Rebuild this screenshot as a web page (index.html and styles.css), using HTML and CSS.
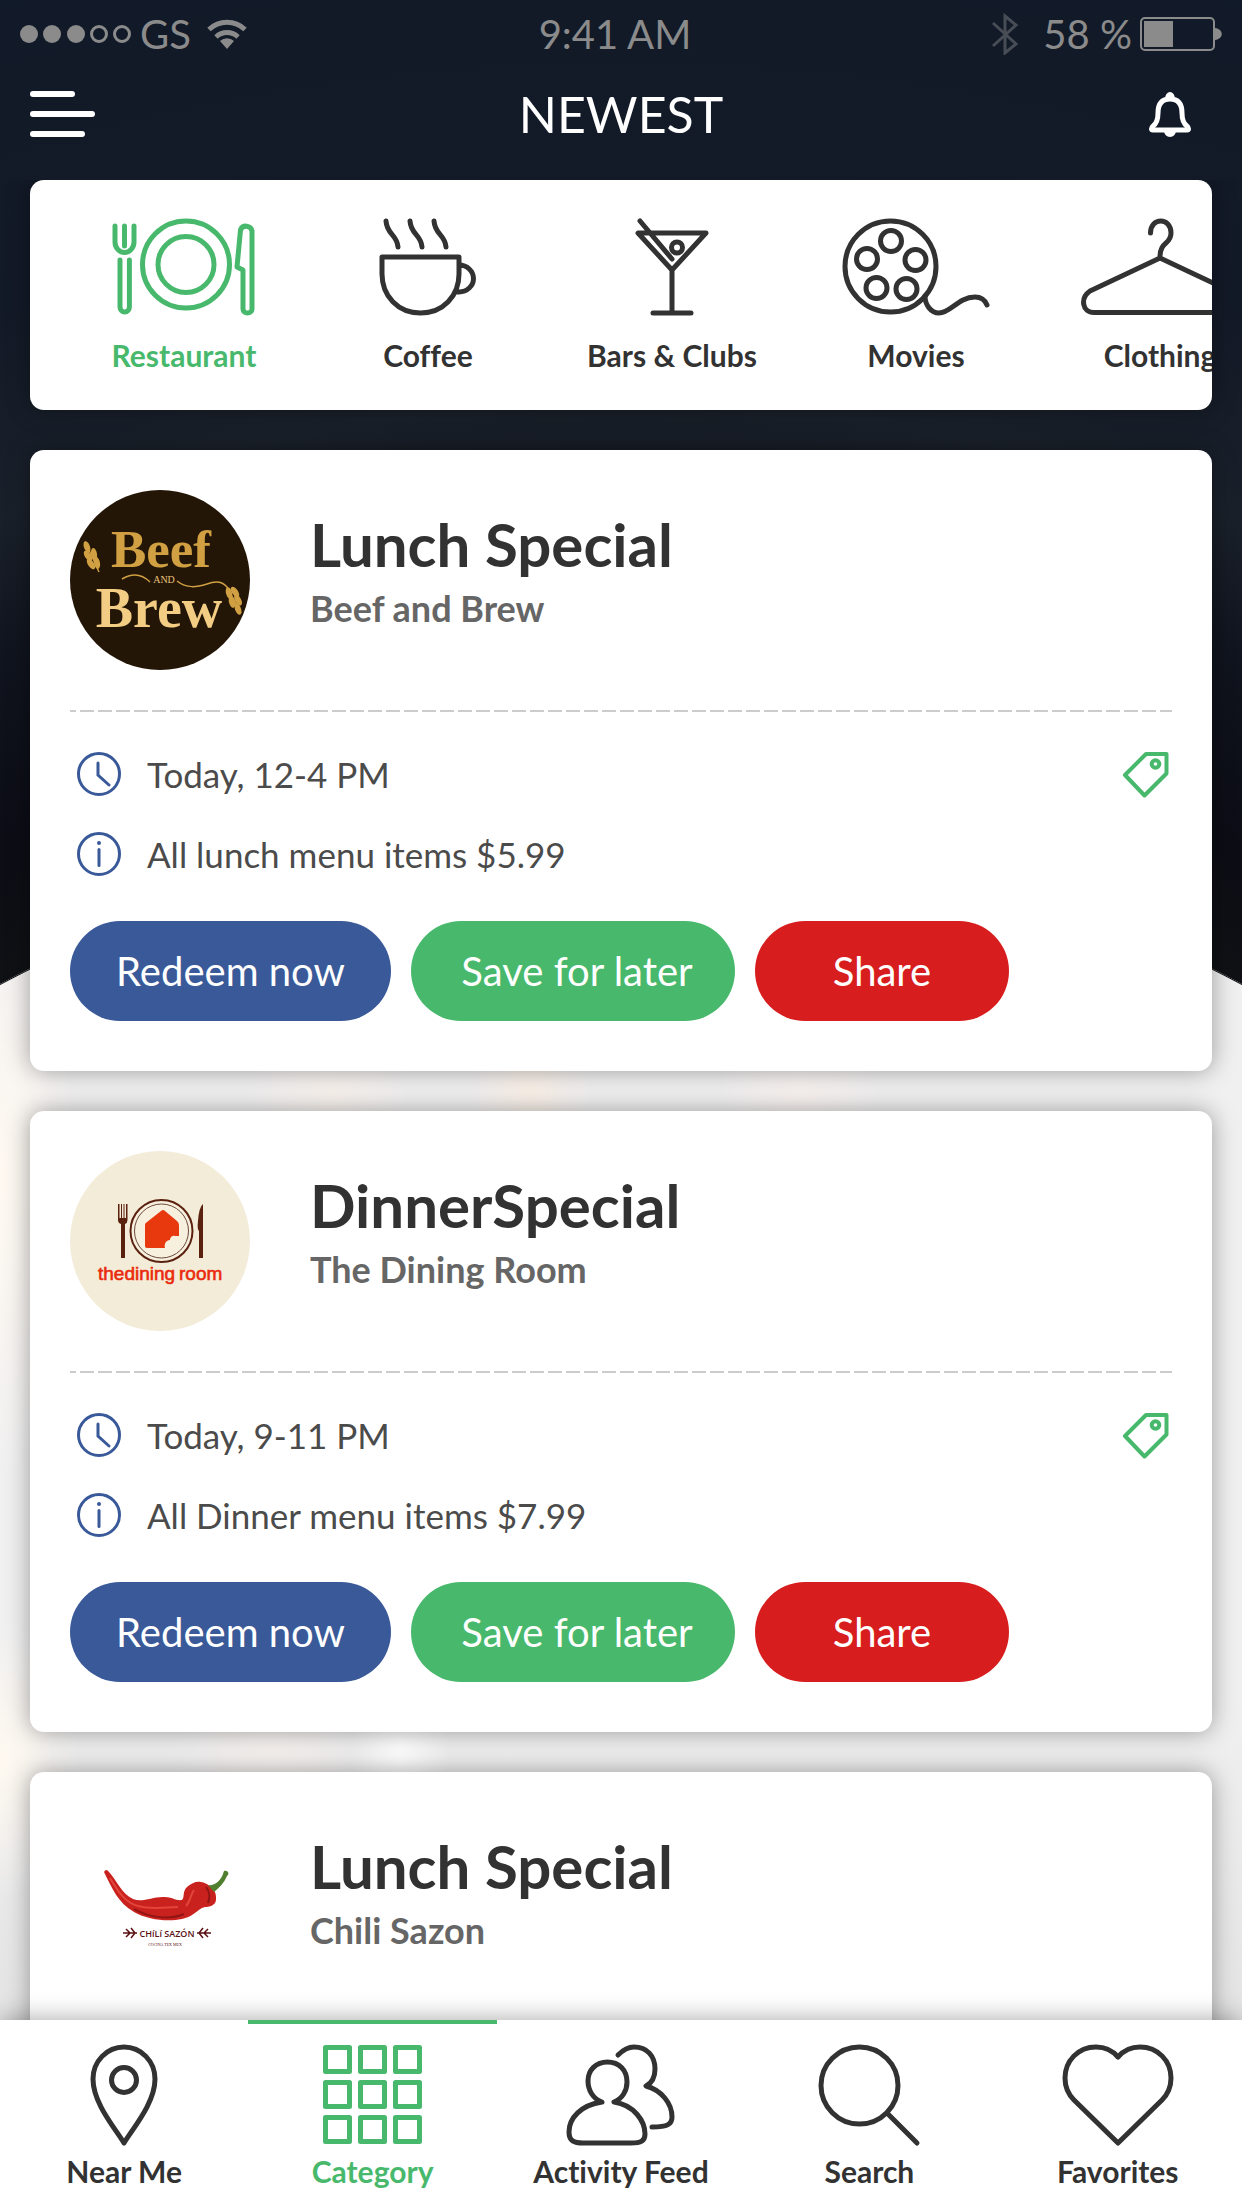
FILE: index.html
```html
<!DOCTYPE html>
<html lang="en">
<head>
<meta charset="utf-8">
<meta name="viewport" content="width=device-width, initial-scale=1">
<title>Newest</title>
<link rel="stylesheet" href="styles.css">
</head>
<body>
<svg class="sprite" aria-hidden="true">
  <symbol id="clock" viewBox="0 0 44 44"><circle cx="22" cy="22" r="20.500"/><path d="M21 11v12l11 10"/></symbol>
  <symbol id="info" viewBox="0 0 44 44"><circle cx="22" cy="22" r="20.500"/><path d="M22 17.500v16"/><circle class="solid" cx="22" cy="11" r="2"/></symbol>
  <symbol id="tag" viewBox="0 0 46 46"><path d="M23 2h20.500v19.500L21.500 43.500 2 23z"/><circle cx="32.500" cy="12" r="3.800"/></symbol>
</svg>
<div class="app">
  <header class="top">
    <div class="status">
      <div class="status-left">
        <svg width="112" height="20" viewBox="0 0 112 20" aria-hidden="true"><g fill="currentColor"><circle cx="9" cy="10" r="9"/><circle cx="32" cy="10" r="9"/><circle cx="56" cy="10" r="9"/></g><g fill="none" stroke="currentColor" stroke-width="3"><circle cx="79" cy="10" r="7.500"/><circle cx="102" cy="10" r="7.500"/></g></svg>
        <span>GS</span>
        <svg class="wifi" width="40" height="30" viewBox="0 0 40 30" aria-hidden="true"><g fill="none" stroke="currentColor" stroke-width="5"><path d="M2 10.500a26 26 0 0 1 36 0"/><path d="M9 18a16 16 0 0 1 22 0"/></g><path fill="currentColor" d="M13 22a10.500 10.500 0 0 1 14 0l-7 8z"/></svg>
      </div>
      <span class="time">9:41 AM</span>
      <div class="status-right">
        <svg class="bluetooth" width="28" height="42" viewBox="0 0 28 42" aria-hidden="true"><path d="M2 10l23 21-11 9V3l11 9L2 33"/></svg>
        <span>58 %</span>
        <svg width="82" height="34" viewBox="0 0 82 34" aria-hidden="true"><rect x="1" y="1" width="73" height="32" rx="4" fill="none" stroke="currentColor" stroke-width="2"/><path fill="currentColor" d="M4 4h29v26H4zM75 11c9 1 9 11 0 12z"/></svg>
      </div>
    </div>
    <div class="bar">
      <button class="icon-button" type="button" aria-label="Menu"><svg width="66" height="46" viewBox="0 0 66 46"><path fill="none" stroke="currentColor" stroke-width="6" stroke-linecap="round" d="M3 3h39M3 23h59M3 43h49"/></svg></button>
      <h1 class="page-title">NEWEST</h1>
      <button class="icon-button bell" type="button" aria-label="Notifications"><svg width="44" height="46" viewBox="0 0 44 46"><path fill="none" stroke="currentColor" stroke-width="5" stroke-linejoin="round" d="M22 8C13 8 10 14 10 22c0 8-2 11-5 13-2 2-2 4 0 4h34c2 0 2-2 0-4-3-2-5-5-5-13 0-8-3-14-12-14z"/><path fill="currentColor" d="M17 8a5 7 0 0 1 10 0zM16 40a6 6 0 0 0 12 0z"/></svg></button>
    </div>
  </header>

  <main class="feed">
    <nav class="categories" aria-label="Categories">
      <a class="category active" href="#restaurant"><svg width="142" height="96" viewBox="0 0 142 96"><path d="M2 7v16a9.500 10.500 0 0 0 19 0V7M11.500 7v20M7 41v47a4.700 5 0 0 0 9.400 0V41"/><circle cx="73" cy="45.500" r="43.500"/><circle cx="73" cy="45.500" r="28"/><path d="M139 12a6 6 0 0 0-11.500-1L124 48l6 3v39a4.500 4 0 0 0 9 0z"/></svg>Restaurant</a>
      <a class="category" href="#coffee"><svg width="96" height="96" viewBox="0 0 96 96"><path d="M6 2c1 14 11 13 12 26M30 2c1 14 11 13 12 26M54 2c1 14 11 13 12 26M2 38h77v17c0 22-16 39-38.500 39S2 77 2 55zM79 46a14.500 13.500 0 0 1 0 27h-3"/></svg>Coffee</a>
      <a class="category" href="#bars"><svg width="72" height="96" viewBox="0 0 72 96"><path d="M2 14h68L36 51zM4 2l32 38M36 51v42M17 94h38"/><circle cx="41" cy="28.500" r="5.500"/></svg>Bars &amp; Clubs</a>
      <a class="category" href="#movies"><svg width="146" height="96" viewBox="0 0 146 96"><circle cx="47.500" cy="47.500" r="45.500"/><circle cx="48" cy="22" r="10.500"/><circle cx="24" cy="40" r="10.500"/><circle cx="72.500" cy="41" r="10.500"/><circle cx="33.500" cy="69" r="10.500"/><circle cx="63.500" cy="70" r="10.500"/><path d="M82 77c0 9 6 17 14 17 12 0 19-16 36-16 6 0 10 3 12 8"/></svg>Movies</a>
      <a class="category" href="#clothing"><svg width="158" height="96" viewBox="0 0 158 96"><path d="M69.500 14c0-16 20.500-16 20.500 0 0 12-11 8-11 24M79 39L9 72c-10 7-8 21.500 4 21.500h132c12 0 14-14.500 4-21.500z"/></svg>Clothing</a>
    </nav>

    <article class="card">
      <div class="card-head">
        <svg class="logo" viewBox="0 0 180 180" role="img" aria-label="Beef and Brew">
          <circle cx="90" cy="90" r="90" fill="#241606"/>
          <g class="logo-serif" text-anchor="middle"><text x="91" y="77" font-size="53" fill="#d0a042">Beef</text><text x="89" y="137" font-size="56" fill="#f3cd83">Brew</text></g>
          <text class="logo-small" x="94" y="93" font-size="10" text-anchor="middle" fill="#e8c27a">AND</text>
          <g fill="none" stroke="#d0a042" stroke-width="1.500"><path d="M29 82c-4-9-8-18-14-30M80 92c-8-8-18-9-28-3M107 91c10 8 20 6 30 3 10-4 16-2 20 3l14 26"/></g>
          <g fill="#d0a042"><ellipse cx="17" cy="57" rx="3" ry="6" transform="rotate(-20 17 57)"/><ellipse cx="18" cy="66" rx="3" ry="6" transform="rotate(-35 18 66)"/><ellipse cx="24" cy="64" rx="3" ry="6" transform="rotate(-10 24 64)"/><ellipse cx="21" cy="74" rx="3" ry="6" transform="rotate(-35 21 74)"/><ellipse cx="27" cy="73" rx="3" ry="6" transform="rotate(-10 27 73)"/><ellipse cx="159" cy="103" rx="3" ry="6" transform="rotate(-15 159 103)"/><ellipse cx="165" cy="102" rx="3" ry="6" transform="rotate(-35 165 102)"/><ellipse cx="162" cy="112" rx="3" ry="6" transform="rotate(-15 162 112)"/><ellipse cx="168" cy="110" rx="3" ry="6" transform="rotate(-30 168 110)"/><ellipse cx="168" cy="119" rx="3" ry="6" transform="rotate(-20 168 119)"/></g>
        </svg>
        <div class="heading"><h2>Lunch Special</h2><p>Beef and Brew</p></div>
      </div>
      <div class="divider"></div>
      <ul class="details">
        <li><svg class="detail-icon"><use href="#clock"/></svg>Today, 12-4 PM<svg class="tag-icon"><use href="#tag"/></svg></li>
        <li><svg class="detail-icon"><use href="#info"/></svg>All lunch menu items $5.99</li>
      </ul>
      <div class="actions"><button class="redeem" type="button">Redeem now</button><button class="save" type="button">Save for later</button><button class="share" type="button">Share</button></div>
    </article>

    <article class="card">
      <div class="card-head">
        <svg class="logo" viewBox="0 0 180 180" role="img" aria-label="The Dining Room">
          <circle cx="90" cy="90" r="90" fill="#f3ecd8"/>
          <circle cx="91.500" cy="80" r="31" fill="#f7f0df" stroke="#5b210f" stroke-width="2"/>
          <circle cx="91.500" cy="80" r="27" fill="none" stroke="#6b4a3a" stroke-width="1"/>
          <path fill="#e8380d" d="M75 74q0-2 2-3l14-11q2-2 4 0l12 10q2 2 2 4v11h-4c-3-1-5 2-5 4-4 0-6 4-5 8H77q-2 0-2-2z"/>
          <path fill="#5b210f" d="M48 53h1.500v14h1.500V53h1v14h1.500V53h1v14H56V53h1.500v16q0 3-2.500 4v34h-4V73q-3-1-3-4zM133 53v54h-4V80q-2-2-1-10 1-14 5-17z"/>
          <g class="logo-sans" font-size="19" fill="#ea2a0c" stroke="#ea2a0c" stroke-width=".6"><text x="28" y="129">thedining</text><text x="109" y="129">room</text></g>
        </svg>
        <div class="heading"><h2>DinnerSpecial</h2><p>The Dining Room</p></div>
      </div>
      <div class="divider"></div>
      <ul class="details">
        <li><svg class="detail-icon"><use href="#clock"/></svg>Today, 9-11 PM<svg class="tag-icon"><use href="#tag"/></svg></li>
        <li><svg class="detail-icon"><use href="#info"/></svg>All Dinner menu items $7.99</li>
      </ul>
      <div class="actions"><button class="redeem" type="button">Redeem now</button><button class="save" type="button">Save for later</button><button class="share" type="button">Share</button></div>
    </article>

    <article class="card">
      <div class="card-head">
        <svg class="logo" viewBox="0 0 180 180" role="img" aria-label="Chili Sazon">
          <path fill="#c9211e" d="M34 60q2-4 5 0c8 9 13 22 24 27 10 4 20-3 32-2 7 0 11 4 17 3 3-3 0-8 5-13 5-4 9-6 14-5 7 1 11 6 14 10 2 6 1 11-1 12-4 4-8 2-12 4-7 4-10 9-20 11-14 3-34 1-48-7C48 91 42 76 34 60z"/>
          <path fill="none" stroke="#e2453a" stroke-width="2" d="M40 66c8 14 16 25 28 28 15 4 28 1 40 1M124 78c-4 6-4 12-8 16"/>
          <path fill="none" stroke="#8e1513" stroke-width="2" d="M64 97c16 9 36 11 50 5M136 75c4 5 4 11 2 16"/>
          <path fill="#4f7f2e" d="M138 73c6 1 13-3 16-14 4-1 6 3 3 5-3 7-8 12-13 16z"/>
          <g fill="#5a1214" text-anchor="middle"><text class="logo-condensed" x="97" y="125" font-size="9">CHíLí SAZÓN</text><text class="logo-small" x="95" y="134" font-size="4">COCINA TEX MEX</text></g>
          <path fill="none" stroke="#5a1214" stroke-width="1.500" d="M53 121h14M56 117l4 4-4 4M61 116l4 5-4 5M141 121h-14M138 117l-4 4 4 4M133 116l-4 5 4 5"/>
        </svg>
        <div class="heading"><h2>Lunch Special</h2><p>Chili Sazon</p></div>
      </div>
    </article>
  </main>

  <nav class="tabs" aria-label="Main">
    <a class="tab" href="#near"><svg width="66" height="100" viewBox="0 0 66 100"><path d="M33 98C24 83 2 58 2 34a31 32 0 0 1 62 0c0 24-22 49-31 64z"/><circle cx="33" cy="35" r="12.500"/></svg>Near Me</a>
    <a class="tab active" href="#category"><svg width="100" height="100" viewBox="0 0 100 100"><path d="M2.500 2.500h24v24h-24zM37.500 2.500h24v24h-24zM72.500 2.500h24v24h-24zM2.500 37.500h24v24h-24zM37.500 37.500h24v24h-24zM72.500 37.500h24v24h-24zM2.500 72.500h24v24h-24zM37.500 72.500h24v24h-24zM72.500 72.500h24v24h-24z"/></svg>Category</a>
    <a class="tab" href="#activity"><svg width="108" height="100" viewBox="0 0 108 100"><path d="M35 57c-9-3-14-12-14-21 0-11 8-19 19.500-19S60 25 60 37c0 9-5 17-13 20 20 3 31 19 31 32 0 7-4 9-14 9H16C7 98 2 96 2 87c0-14 12-27 33-30zM51 10c5-5 10-8 16-8 13 0 21 9 21 22 0 8-3 14-9 17 15 4 26 17 26 31 0 7-4 10-20 10"/></svg>Activity Feed</a>
    <a class="tab" href="#search"><svg width="100" height="100" viewBox="0 0 100 100"><circle cx="40.500" cy="40.500" r="38.500"/><path d="M68 68l30 30"/></svg>Search</a>
    <a class="tab" href="#favorites"><svg width="110" height="100" viewBox="0 0 110 100"><path d="M55 12C49 5 41 2 33 2 15 2 2 16 2 33c0 9 3 16 9 22l44 43 44-43c6-6 9-13 9-22C108 16 95 2 77 2c-8 0-16 3-22 10z"/></svg>Favorites</a>
  </nav>
</div>
</body>
</html>
```
FILE: styles.css
```css
:root {
  --green: #48b96c;
  --ink: #323232;
  --blue: #395999;
}

* {
  box-sizing: border-box;
}

body {
  margin: 0;
  font-family: Lato, "Liberation Sans", sans-serif;
  font-variant-ligatures: none;
  color: var(--ink);
}

h1, h2, p, ul {
  margin: 0;
  padding: 0;
}

a {
  color: inherit;
  text-decoration: none;
}

button {
  border: 0;
  padding: 0;
  font-family: inherit;
  cursor: pointer;
}

svg {
  display: block;
  flex: none;
}

.sprite {
  display: none;
}

.app {
  display: flex;
  flex-direction: column;
  height: 100vh;
  background:
    radial-gradient(circle 1325px at 50% 2155px, transparent 1324px, #101115 1325px, transparent 1326px),
    radial-gradient(circle 1325px at 50% 2155px, transparent 1325px, #101115 1326px, #0c0d15 1450px, #10141e 1620px, #1a202a 1750px, #131a27 1950px, #111a29 2300px),
    radial-gradient(ellipse 60px 80px at 530px 1090px, #fbf1e8, transparent),
    radial-gradient(ellipse 80px 80px at 330px 1090px, #f9f3ee, transparent),
    radial-gradient(ellipse 80px 80px at 800px 1090px, #f9f3f0, transparent),
    radial-gradient(ellipse 100px 80px at 270px 1750px, #f7f2ef, transparent),
    radial-gradient(ellipse 50px 80px at 400px 1750px, #ffffff, transparent),
    radial-gradient(ellipse 80px 300px at 0 1180px, #fff9f1, transparent),
    radial-gradient(ellipse 80px 140px at 0 1760px, #fff9f0, transparent),
    linear-gradient(#f1f0f1 1000px, #f0f0f1 1700px, #e4e4e5 2020px);
}

/* Header */

.top {
  flex: none;
  color: #fff;
}

.status {
  display: grid;
  grid-template-columns: 1fr auto 1fr;
  align-items: center;
  height: 68px;
  padding: 0 20px;
  color: #8b8b8b;
  font-size: 40px;
  line-height: 48px;
}

.status-left,
.status-right {
  display: flex;
  align-items: center;
  gap: 8px;
}

.status-right {
  justify-content: flex-end;
}

.time {
  padding-right: 12px;
}

.wifi {
  margin-left: 8px;
}

.bluetooth {
  margin-right: 16px;
  fill: none;
  stroke: #474c55;
  stroke-width: 3;
}

.bar {
  display: grid;
  grid-template-columns: 1fr auto 1fr;
  align-items: center;
  height: 112px;
  padding: 0 30px 20px;
}

.icon-button {
  justify-self: start;
  background: none;
  color: inherit;
}

.bell {
  justify-self: end;
  margin-right: 20px;
}

.page-title {
  font-size: 50px;
  font-weight: 400;
  line-height: 60px;
}

/* Feed */

.feed {
  display: flex;
  flex: 1;
  flex-direction: column;
  gap: 40px;
  min-height: 0;
  padding: 0 30px;
  overflow: hidden;
}

.categories,
.card {
  flex: none;
  border-radius: 14px;
  background: #fff;
  box-shadow: 0 0 24px rgba(0, 0, 0, 0.36);
}

.categories {
  display: flex;
  height: 230px;
  padding: 39px 0 0 32px;
  overflow: hidden;
}

.category,
.tab {
  display: flex;
  flex-direction: column;
  align-items: center;
  font-size: 30px;
  font-weight: 700;
  line-height: 36px;
}

.category {
  flex: none;
  gap: 22px;
  width: 244px;
}

.category svg,
.tab svg {
  overflow: visible;
  fill: none;
  stroke: currentColor;
  stroke-width: 5;
  stroke-linecap: round;
  stroke-linejoin: round;
}

.active {
  color: var(--green);
}

.card {
  padding: 40px 40px 50px;
}

.card-head {
  display: flex;
  gap: 60px;
}

.logo {
  width: 180px;
  height: 180px;
}

.logo-serif {
  font-family: "Liberation Serif", serif;
  font-weight: 700;
}

.logo-small {
  font-family: "Liberation Serif", serif;
}

.logo-sans {
  font-family: "Liberation Sans", sans-serif;
}

.logo-condensed {
  font-family: "Open Sans", sans-serif;
  font-weight: 600;
}

.heading {
  padding-top: 24px;
}

.heading h2 {
  font-size: 60px;
  font-weight: 700;
  line-height: 60px;
}

.heading p {
  margin-top: 12px;
  color: #666;
  font-size: 36px;
  font-weight: 700;
  line-height: 44px;
}

.divider {
  height: 2px;
  margin: 40px 0;
  background: repeating-linear-gradient(90deg, #ccc 0 6px, transparent 6px 10px, #ccc 10px 18px);
}

.details {
  display: flex;
  flex-direction: column;
  gap: 36px;
  list-style: none;
  color: #4b4b4b;
  font-size: 35px;
  line-height: 42px;
}

.details li {
  display: flex;
  align-items: center;
  gap: 26px;
  padding: 0 3px 0 7px;
}

.detail-icon {
  width: 44px;
  height: 44px;
  fill: none;
  stroke: var(--blue);
  stroke-width: 3;
  stroke-linecap: round;
}

.solid {
  fill: var(--blue);
  stroke: none;
}

.tag-icon {
  width: 46px;
  height: 46px;
  margin: 0 0 -2px auto;
  fill: none;
  stroke: var(--green);
  stroke-width: 4;
  stroke-linejoin: round;
}

.actions {
  display: flex;
  gap: 20px;
  margin-top: 45px;
}

.actions button {
  height: 100px;
  border-radius: 50px;
  color: #fff;
  font-size: 40px;
  line-height: 48px;
}

.actions .redeem {
  width: 321px;
  background: var(--blue);
}

.actions .save {
  width: 324px;
  padding-left: 8px;
  background: var(--green);
}

.actions .share {
  width: 254px;
  background: #d71d1e;
}

/* Tab bar */

.tabs {
  z-index: 1;
  display: grid;
  flex: none;
  grid-template-columns: repeat(5, 1fr);
  height: 188px;
  background: #fff;
  box-shadow: 0 0 24px rgba(0, 0, 0, 0.36);
}

.tab {
  gap: 8px;
  padding-top: 21px;
  border-top: 4px solid transparent;
}

.tab.active {
  border-color: var(--green);
}
```
